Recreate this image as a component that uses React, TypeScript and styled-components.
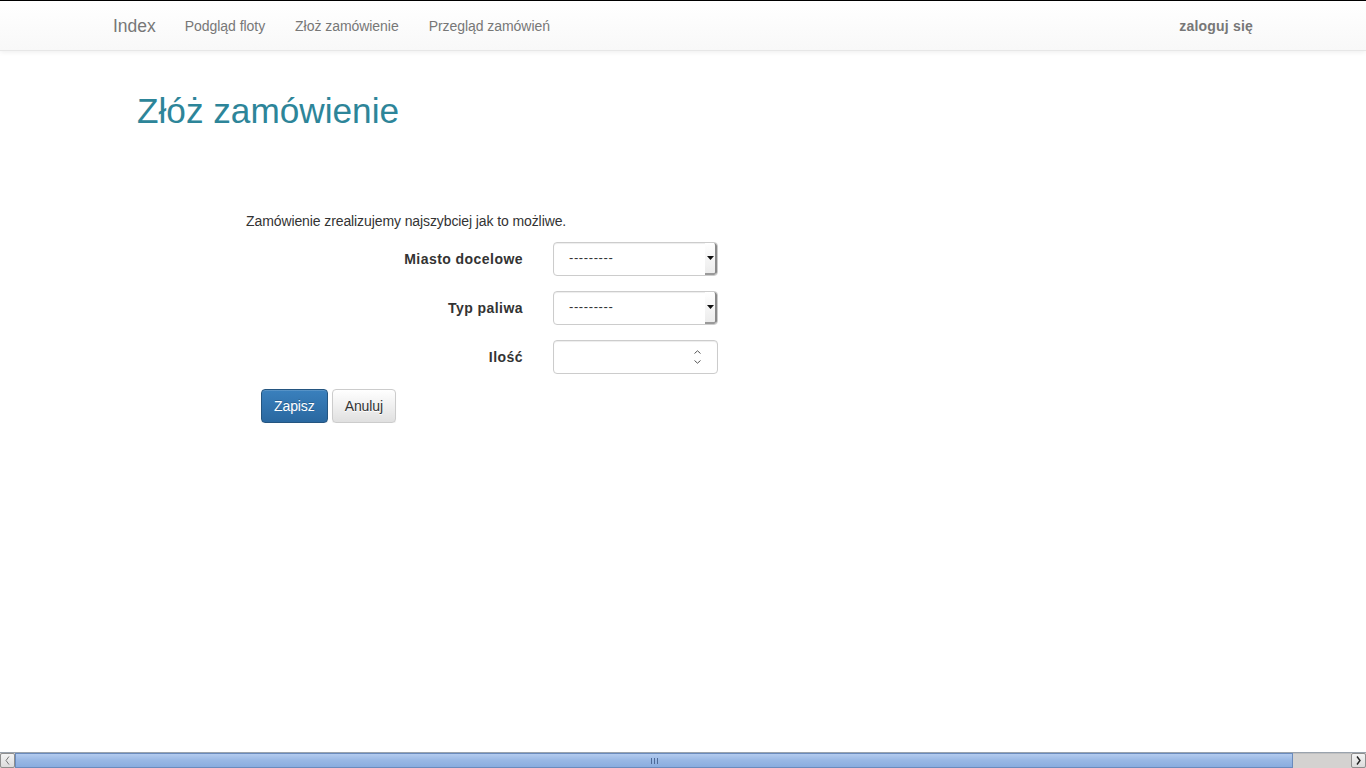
import React from "react";
import styled, { createGlobalStyle } from "styled-components";

const Global = createGlobalStyle`
  html, body { margin: 0; padding: 0; overflow: hidden; background: #fff; }
  body {
    font-family: "Liberation Sans", Arial, sans-serif;
    font-size: 14px;
    line-height: 1.42857;
    color: #333;
  }
  * { box-sizing: border-box; }
`;

const TopLine = styled.div`
  height: 1px;
  background: #000;
`;

const Navbar = styled.nav`
  height: 50px;
  background: linear-gradient(to bottom, #ffffff 0%, #f8f8f8 100%);
  border-bottom: 1px solid #e7e7e7;
  box-shadow: inset 0 1px 0 rgba(255, 255, 255, 0.15), 0 1px 5px rgba(0, 0, 0, 0.075);
`;

const NavContainer = styled.div`
  width: 1170px;
  margin: 0 auto;
  padding: 0 15px;
  height: 100%;
  display: flex;
  align-items: center;
`;

const Brand = styled.a`
  font-size: 17.5px;
  line-height: 20px;
  color: #777;
  padding: 15px 14px 15px 15px;
  margin-left: -15px;
  text-decoration: none;
  text-shadow: 0 1px 0 rgba(255, 255, 255, 0.25);
`;

const NavLinks = styled.ul`
  list-style: none;
  margin: 0;
  padding: 0;
  display: flex;
`;

const NavItem = styled.a<{ $bold?: boolean }>`
  display: block;
  padding: 15px;
  line-height: 20px;
  color: #777;
  font-weight: ${(p) => (p.$bold ? 700 : 400)};
  letter-spacing: ${(p) => (p.$bold ? "0.2px" : "-0.05px")};
  text-decoration: none;
  text-shadow: 0 1px 0 rgba(255, 255, 255, 0.25);
`;

const RightNav = styled(NavLinks)`
  margin-left: auto;
  margin-right: -15px;
`;

const Main = styled.main`
  padding-left: 137px;
  padding-top: 40px;
`;

const Title = styled.h1`
  margin: 0;
  font-size: 35.2px;
  font-weight: 500;
  line-height: 39.6px;
  color: #2d8599;
`;

const FormSection = styled.section`
  margin-left: 109px;
  margin-top: 80px;
`;

const Lead = styled.p`
  margin: 0 0 11px 0;
  line-height: 20px;
  letter-spacing: -0.1px;
`;

const Row = styled.div`
  display: grid;
  grid-template-columns: 277px 165px;
  column-gap: 30px;
  align-items: center;
  margin-bottom: 15px;
`;

const Label = styled.label`
  text-align: right;
  font-weight: 700;
  line-height: 20px;
  letter-spacing: 0.45px;
`;

const Field = styled.div`
  height: 34px;
  border: 1px solid #ccc;
  border-radius: 4px;
  box-shadow: inset 0 1px 1px rgba(0, 0, 0, 0.075);
  background: #fff;
  display: flex;
  align-items: stretch;
  overflow: hidden;
`;

const SelectText = styled.span`
  flex: 1;
  display: flex;
  align-items: center;
  padding-left: 15px;
  font-size: 13px;
  color: #333;
  letter-spacing: 0.6px;
`;

const SelectArrow = styled.span`
  width: 12px;
  display: flex;
  align-items: center;
  justify-content: center;
  background: linear-gradient(to bottom, #ffffff, #ececec);
  border-right: 2px solid #8a8a8a;
  border-bottom: 2px solid #9a9a9a;
  border-top-right-radius: 3px;
  border-bottom-right-radius: 3px;
`;

const Spinner = styled.span`
  margin-left: auto;
  width: 30px;
  display: flex;
  flex-direction: column;
  align-items: center;
  justify-content: center;
  gap: 6px;
  padding-right: 10px;
`;

const Buttons = styled.div`
  margin-left: 15px;
  margin-top: 0;
  display: flex;
  gap: 4px;
`;

const Btn = styled.button<{ $primary?: boolean }>`
  font-family: inherit;
  font-size: 14px;
  line-height: 20px;
  padding: 6px 12px;
  height: 34px;
  border-radius: 4px;
  cursor: pointer;
  letter-spacing: -0.1px;
  border: 1px solid ${(p) => (p.$primary ? "#245580" : "#ccc")};
  color: ${(p) => (p.$primary ? "#fff" : "#333")};
  background: ${(p) =>
    p.$primary
      ? "linear-gradient(to bottom, #3a80bd 0%, #2a68a0 100%)"
      : "linear-gradient(to bottom, #ffffff 0%, #e0e0e0 100%)"};
  text-shadow: ${(p) => (p.$primary ? "0 -1px 0 rgba(0,0,0,0.2)" : "0 1px 0 #fff")};
  box-shadow: inset 0 1px 0 rgba(255, 255, 255, 0.15), 0 1px 1px rgba(0, 0, 0, 0.075);
`;

const ScrollBar = styled.div`
  position: fixed;
  left: 0;
  right: 0;
  bottom: 0;
  height: 16px;
  display: flex;
  background: #d6d4d2;
  border-top: 1px solid #9aa3ad;
`;

const ScrollBtn = styled.div`
  width: 15px;
  display: flex;
  align-items: center;
  justify-content: center;
  background: linear-gradient(to bottom, #f4f4f4, #dcdcdc);
  border: 1px solid #8e8e8e;
  border-radius: 2px;
`;

const Thumb = styled.div`
  width: 1278px;
  display: flex;
  align-items: center;
  justify-content: center;
  background: linear-gradient(to bottom, #b3cbee 0%, #98b7e4 50%, #8aaddf 100%);
  border: 1px solid #6a8bbd;
`;

const Track = styled.div`
  flex: 1;
  background: #d4d2d0;
  border-top: 1px solid #c0c0c0;
`;

const Grip = styled.span`
  display: flex;
  gap: 2px;
  & > i {
    width: 1px;
    height: 6px;
    background: #4e6a97;
  }
`;

const ArrowDown = () => (
  <svg width="7" height="4" viewBox="0 0 7 4">
    <path d="M0 0h7L3.5 4z" fill="#111" />
  </svg>
);

const SelectBox = ({ value }: { value: string }) => (
  <Field>
    <SelectText>{value}</SelectText>
    <SelectArrow>
      <ArrowDown />
    </SelectArrow>
  </Field>
);

const NumberBox = () => (
  <Field>
    <Spinner>
      <svg width="7" height="4" viewBox="0 0 7 4">
        <path d="M0.5 3.5L3.5 0.8L6.5 3.5" fill="none" stroke="#555" strokeWidth="1" />
      </svg>
      <svg width="7" height="4" viewBox="0 0 7 4">
        <path d="M0.5 0.5L3.5 3.2L6.5 0.5" fill="none" stroke="#555" strokeWidth="1" />
      </svg>
    </Spinner>
  </Field>
);

export default function App() {
  return (
    <>
      <Global />
      <TopLine />
      <Navbar>
        <NavContainer>
          <Brand href="#">Index</Brand>
          <NavLinks>
            <li><NavItem href="#">Podgląd floty</NavItem></li>
            <li><NavItem href="#">Złoż zamówienie</NavItem></li>
            <li><NavItem href="#">Przegląd zamówień</NavItem></li>
          </NavLinks>
          <RightNav>
            <li><NavItem href="#" $bold>zaloguj się</NavItem></li>
          </RightNav>
        </NavContainer>
      </Navbar>
      <Main>
        <Title>Złóż zamówienie</Title>
        <FormSection>
          <Lead>Zamówienie zrealizujemy najszybciej jak to możliwe.</Lead>
          <Row>
            <Label>Miasto docelowe</Label>
            <SelectBox value="---------" />
          </Row>
          <Row>
            <Label>Typ paliwa</Label>
            <SelectBox value="---------" />
          </Row>
          <Row>
            <Label>Ilość</Label>
            <NumberBox />
          </Row>
          <Buttons>
            <Btn $primary>Zapisz</Btn>
            <Btn>Anuluj</Btn>
          </Buttons>
        </FormSection>
      </Main>
      <ScrollBar>
        <ScrollBtn>
          <svg width="5" height="9" viewBox="0 0 5 9">
            <path d="M4 0.5L1 4.5L4 8.5" fill="none" stroke="#777" strokeWidth="1" />
          </svg>
        </ScrollBtn>
        <Thumb>
          <Grip><i /><i /><i /></Grip>
        </Thumb>
        <Track />
        <ScrollBtn>
          <svg width="5" height="9" viewBox="0 0 5 9">
            <path d="M1 0.5L4 4.5L1 8.5" fill="none" stroke="#222" strokeWidth="1.4" />
          </svg>
        </ScrollBtn>
      </ScrollBar>
    </>
  );
}
